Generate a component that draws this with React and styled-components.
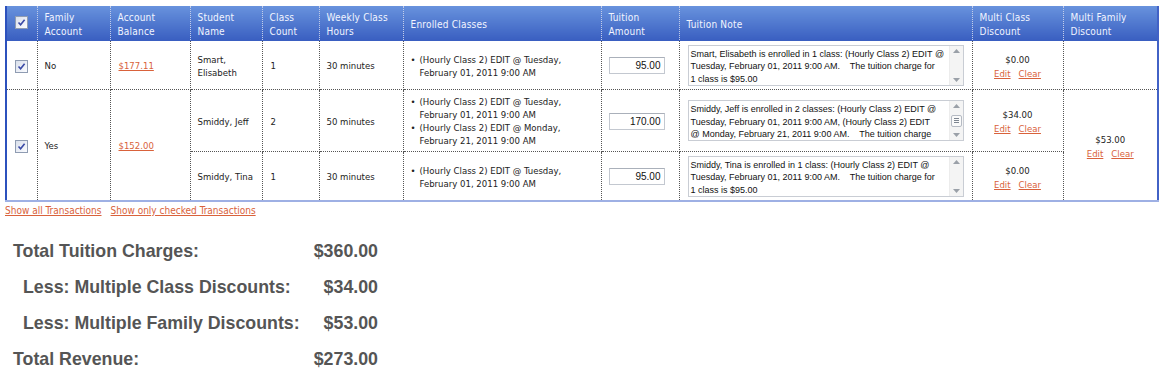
import React from "react";
import styled, { createGlobalStyle } from "styled-components";

const GlobalStyle = createGlobalStyle`
  body {
    margin: 0;
    background: #fff;
  }
`;

const Page = styled.div`
  padding: 6px 0 0 5px;
  font-family: "DejaVu Sans Condensed", Tahoma, "Liberation Sans", sans-serif;
`;

const Grid = styled.table`
  width: 1152px;
  table-layout: fixed;
  border-collapse: collapse;
  border-left: 2px solid #2c51bd;
  border-right: 2px solid #4262c6;
  border-bottom: 2px solid #9eb0e4;
  font-size: 9.5px;
  color: #222;
`;

const HeadRow = styled.tr`
  height: 34px;
`;

const HeadCell = styled.th`
  padding: 4px 6px 0 7px;
  text-align: left;
  font-weight: normal;
  font-size: 10px;
  line-height: 14px;
  letter-spacing: 0.2px;
  color: #f2f5ff;
  background: linear-gradient(#6892dd, #3a5fc1);
  border-left: 1px dotted #c3cde9;
  border-right: 1px dotted #c3cde9;
  border-bottom: 1px solid #3a5fc1;
  vertical-align: middle;
`;

const Row = styled.tr`
  height: ${({ $h }) => $h}px;
`;

const Cell = styled.td`
  padding: ${({ $pad }) => $pad || "2px 5px 0 7px"};
  border: 1px dotted #555;
  vertical-align: middle;
  line-height: 13px;
  text-align: ${({ $center }) => ($center ? "center" : "left")};
`;

const CheckBox = styled.span`
  display: inline-flex;
  align-items: center;
  justify-content: center;
  width: 11px;
  height: 11px;
  border: 1px solid #8f9cb2;
  background: linear-gradient(135deg, #d9dfeb, #fbfcff);
  vertical-align: middle;
`;

const MoneyLink = styled.a`
  color: #d9623b;
  text-decoration: underline;
  cursor: pointer;
`;

const ClassList = styled.ul`
  margin: 0;
  padding: 0;
  list-style: none;

  li {
    display: flex;
  }

  li::before {
    content: "•";
    flex: 0 0 9px;
  }
`;

const AmountInput = styled.input`
  box-sizing: border-box;
  width: 56px;
  height: 17px;
  padding: 0 3px 0 0;
  border: 1px solid #c3c8d0;
  border-top-color: #aab0ba;
  text-align: right;
  font-family: "Liberation Sans", Arial, sans-serif;
  font-size: 10px;
  color: #111;
  background: #fff;
`;

const NoteBox = styled.div`
  display: flex;
  height: 41px;
  box-sizing: border-box;
  border: 1px solid #c9cdd4;
  background: #fff;
`;

const NoteText = styled.div`
  flex: 1;
  padding: 2px 1px 0 2px;
  overflow: hidden;
  white-space: pre;
  font-family: "Liberation Sans", Arial, sans-serif;
  font-size: 9px;
  line-height: 12.5px;
  color: #111;
`;

const ScrollTrack = styled.div`
  width: 13px;
  display: flex;
  flex-direction: column;
  align-items: center;
  justify-content: space-between;
  padding: 3px 0;
  background: #f4f4f4;
  border-left: 1px solid #ececec;
`;

const Thumb = styled.span`
  display: flex;
  align-items: center;
  justify-content: center;
  width: 9px;
  height: 10px;
  border: 1px solid #b5bac3;
  border-radius: 2px;
  background: #fafafa;
`;

const Discount = styled.div`
  display: flex;
  flex-direction: column;
  align-items: center;
  padding-top: 4px;
  line-height: 14px;
`;

const LinkPair = styled.div`
  display: flex;
  gap: 8px;
`;

const Links = styled.div`
  display: flex;
  gap: 9px;
  margin-top: 2px;
  font-size: 10px;
  line-height: 13px;
`;

const Summary = styled.div`
  display: grid;
  grid-template-columns: 300px 65px;
  grid-auto-rows: 36px;
  align-items: center;
  margin-top: 16px;
  padding-left: 8px;
  font-family: "Liberation Sans", Arial, sans-serif;
  font-weight: bold;
  font-size: 17.8px;
  color: #555;
`;

const Label = styled.div`
  padding-left: ${({ $indent }) => ($indent ? "10px" : "0")};
  white-space: nowrap;
`;

const Amount = styled.div`
  text-align: right;
`;

const Check = () => (
  <CheckBox>
    <svg width="9" height="9" viewBox="0 0 9 9">
      <path d="M1.5 4.5 L3.6 6.8 L7.6 1.8" fill="none" stroke="#3a4aa6" strokeWidth="1.6" />
    </svg>
  </CheckBox>
);

const Arrow = ({ up }) => (
  <svg width="7" height="4" viewBox="0 0 7 4">
    <path d={up ? "M0 4 L3.5 0 L7 4 Z" : "M0 0 L3.5 4 L7 0 Z"} fill="#9aa0a8" />
  </svg>
);

const Note = ({ text, thumb }) => (
  <NoteBox>
    <NoteText>{text}</NoteText>
    <ScrollTrack>
      <Arrow up />
      {thumb && (
        <Thumb>
          <svg width="5" height="5" viewBox="0 0 5 5">
            <path d="M0 0.5 H5 M0 2.5 H5 M0 4.5 H5" stroke="#7d8590" strokeWidth="1" />
          </svg>
        </Thumb>
      )}
      <Arrow />
    </ScrollTrack>
  </NoteBox>
);

const DiscountCell = ({ value }) => (
  <Discount>
    <span>{value}</span>
    <LinkPair>
      <MoneyLink>Edit</MoneyLink>
      <MoneyLink>Clear</MoneyLink>
    </LinkPair>
  </Discount>
);

const colWidths = [31, 73, 80, 72, 57, 84, 198, 78, 293, 91, 95];

const heads = [
  "Family Account",
  "Account Balance",
  "Student Name",
  "Class Count",
  "Weekly Class Hours",
  "Enrolled Classes",
  "Tuition Amount",
  "Tuition Note",
  "Multi Class Discount",
  "Multi Family Discount",
];

// line breaks follow the wrapping of the original textarea
const notes = {
  smart:
    "Smart, Elisabeth is enrolled in 1 class: (Hourly Class 2) EDIT @\nTuesday, February 01, 2011 9:00 AM.    The tuition charge for\n1 class is $95.00",
  jeff:
    "Smiddy, Jeff is enrolled in 2 classes: (Hourly Class 2) EDIT @\nTuesday, February 01, 2011 9:00 AM, (Hourly Class 2) EDIT\n@ Monday, February 21, 2011 9:00 AM.    The tuition charge\nfor 2 classes is $170.00",
  tina:
    "Smiddy, Tina is enrolled in 1 class: (Hourly Class 2) EDIT @\nTuesday, February 01, 2011 9:00 AM.    The tuition charge for\n1 class is $95.00",
};

const totals = [
  ["Total Tuition Charges:", "$360.00", false],
  ["Less: Multiple Class Discounts:", "$34.00", true],
  ["Less: Multiple Family Discounts:", "$53.00", true],
  ["Total Revenue:", "$273.00", false],
];

const App = () => {
  return (
    <Page>
      <GlobalStyle />
      <Grid>
        <colgroup>
          {colWidths.map((w, i) => (
            <col key={i} style={{ width: w }} />
          ))}
        </colgroup>
        <thead>
          <HeadRow>
            <HeadCell style={{ textAlign: "center", padding: 0 }}>
              <Check />
            </HeadCell>
            {heads.map((h) => (
              <HeadCell key={h}>{h}</HeadCell>
            ))}
          </HeadRow>
        </thead>
        <tbody>
          <Row $h={49}>
            <Cell $center $pad="2px 0 0">
              <Check />
            </Cell>
            <Cell>No</Cell>
            <Cell $pad="2px 5px 0 8px">
              <MoneyLink>$177.11</MoneyLink>
            </Cell>
            <Cell>Smart, Elisabeth</Cell>
            <Cell $pad="2px 5px 0 8px">1</Cell>
            <Cell>30 minutes</Cell>
            <Cell $pad="2px 24px 0 7px">
              <ClassList>
                <li>(Hourly Class 2) EDIT @ Tuesday, February 01, 2011 9:00 AM</li>
              </ClassList>
            </Cell>
            <Cell $pad="2px 0 0 7px">
              <AmountInput readOnly value="95.00" />
            </Cell>
            <Cell $pad="1px 8px 0 8px">
              <Note text={notes.smart} />
            </Cell>
            <Cell $center $pad="0">
              <DiscountCell value="$0.00" />
            </Cell>
            <Cell />
          </Row>
          <Row $h={62}>
            <Cell $center $pad="2px 0 0" rowSpan={2}>
              <Check />
            </Cell>
            <Cell rowSpan={2}>Yes</Cell>
            <Cell $pad="2px 5px 0 8px" rowSpan={2}>
              <MoneyLink>$152.00</MoneyLink>
            </Cell>
            <Cell>Smiddy, Jeff</Cell>
            <Cell $pad="2px 5px 0 8px">2</Cell>
            <Cell>50 minutes</Cell>
            <Cell $pad="2px 24px 0 7px">
              <ClassList>
                <li>(Hourly Class 2) EDIT @ Tuesday, February 01, 2011 9:00 AM</li>
                <li>(Hourly Class 2) EDIT @ Monday, February 21, 2011 9:00 AM</li>
              </ClassList>
            </Cell>
            <Cell $pad="2px 0 0 7px">
              <AmountInput readOnly value="170.00" />
            </Cell>
            <Cell $pad="1px 8px 0 8px">
              <Note text={notes.jeff} thumb />
            </Cell>
            <Cell $center $pad="0">
              <DiscountCell value="$34.00" />
            </Cell>
            <Cell $center $pad="0" rowSpan={2}>
              <DiscountCell value="$53.00" />
            </Cell>
          </Row>
          <Row $h={50}>
            <Cell>Smiddy, Tina</Cell>
            <Cell $pad="2px 5px 0 8px">1</Cell>
            <Cell>30 minutes</Cell>
            <Cell $pad="2px 24px 0 7px">
              <ClassList>
                <li>(Hourly Class 2) EDIT @ Tuesday, February 01, 2011 9:00 AM</li>
              </ClassList>
            </Cell>
            <Cell $pad="2px 0 0 7px">
              <AmountInput readOnly value="95.00" />
            </Cell>
            <Cell $pad="1px 8px 0 8px">
              <Note text={notes.tina} />
            </Cell>
            <Cell $center $pad="0">
              <DiscountCell value="$0.00" />
            </Cell>
          </Row>
        </tbody>
      </Grid>
      <Links>
        <MoneyLink>Show all Transactions</MoneyLink>
        <MoneyLink>Show only checked Transactions</MoneyLink>
      </Links>
      <Summary>
        {totals.map(([label, value, indent]) => (
          <React.Fragment key={label}>
            <Label $indent={indent}>{label}</Label>
            <Amount>{value}</Amount>
          </React.Fragment>
        ))}
      </Summary>
    </Page>
  );
};

export default App;
